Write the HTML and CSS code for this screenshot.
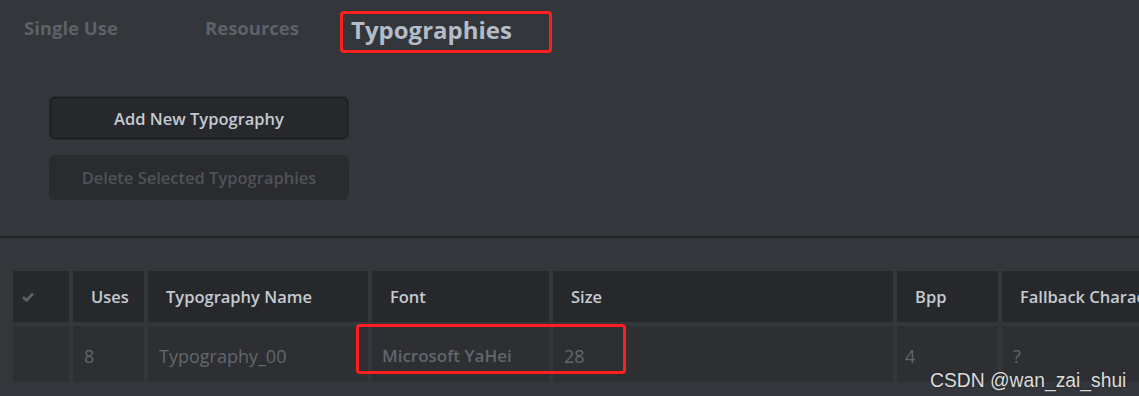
FILE: index.html
```html
<!DOCTYPE html>
<html lang="en">
<head>
  <meta charset="UTF-8" />
  <title>Typographies</title>
  <link rel="stylesheet" href="styles.css">
</head>
<body>
  <div class="top-panel">
    <div class="tabs">
      <span class="tab tab-single">Single Use</span>
      <span class="tab tab-resources">Resources</span>
      <span class="tab tab-active"><span class="highlight">Typographies</span></span>
    </div>

    <div class="actions">
      <button class="btn btn-add">Add New Typography</button>
      <button class="btn btn-delete" disabled>Delete Selected Typographies</button>
    </div>
  </div>

  <div class="divider"></div>

  <div class="table-wrap">
    <div class="grid">
      <div class="cell head check-col">
        <svg width="12" height="10" viewBox="0 0 12 10"><path d="M1 5 L4.5 8.5 L11 1.5" fill="none" stroke="#5c6067" stroke-width="2.6"/></svg>
      </div>
      <div class="cell head">Uses</div>
      <div class="cell head">Typography Name</div>
      <div class="cell head">Font</div>
      <div class="cell head">Size</div>
      <div class="cell head">Bpp</div>
      <div class="cell head">Fallback Character</div>

      <div class="cell data"></div>
      <div class="cell data">8</div>
      <div class="cell data">Typography_00</div>
      <div class="cell data font-cell">Microsoft YaHei</div>
      <div class="cell data">28</div>
      <div class="cell data bpp-cell">4</div>
      <div class="cell data">?</div>
    </div>

    <div class="mark-box"></div>
    <div class="watermark">CSDN @wan_zai_shui</div>
  </div>
</body>
</html>
```

FILE: styles.css
```css
body {
  margin: 0;
  background: #33363b;
  font-family: 'Open Sans', 'Noto Sans', sans-serif;
  overflow: hidden;
}

.top-panel {
  height: 236px;
  box-sizing: border-box;
  padding-top: 11px;
}

.tabs {
  display: flex;
  align-items: center;
  height: 42px;
  font-weight: 700;
}

.tab {
  font-size: 18.5px;
  color: #5d6168;
  margin-top: -10px;
}

.tab-single {
  width: 205px;
  padding-left: 24px;
  box-sizing: border-box;
}

.tab-resources {
  width: 135px;
}

.tab-active {
  margin-top: 0;
}

.highlight {
  display: inline-block;
  height: 42px;
  line-height: 32px;
  box-sizing: border-box;
  padding: 0 37px 4px 8px;
  border: 3px solid #ff1f1f;
  border-radius: 4px;
  font-size: 24px;
  color: #b4bcc6;
}

.actions {
  display: flex;
  flex-direction: column;
  gap: 15px;
  margin: 43px 0 0 49px;
  width: 300px;
}

.btn {
  font-family: 'Open Sans', 'Noto Sans', sans-serif;
  font-size: 16.5px;
  font-weight: 600;
  height: 44px;
  border-radius: 6px;
  border: none;
  cursor: pointer;
}

.btn-add {
  background: #27282c;
  color: #c5cad1;
  outline: 1px dotted #0d0d0f;
  outline-offset: -2px;
  border: 1px solid #2c2d31;
}

.btn-delete {
  height: 45px;
  background: #2a2b2f;
  color: #4f5258;
}

.divider {
  height: 2px;
  background: #232427;
}

.table-wrap {
  position: relative;
  height: 158px;
  padding: 33px 0 0 13px;
  box-sizing: border-box;
}

.grid {
  display: grid;
  grid-template-columns: 56px 71px 220px 177px 340px 101px 200px;
  grid-template-rows: 51px 56px;
  gap: 4px;
}

.cell {
  display: flex;
  align-items: center;
  white-space: nowrap;
  overflow: hidden;
}

.head {
  background: #27282c;
  color: #c5cad1;
  font-size: 16.5px;
  font-weight: 600;
  padding-left: 18px;
}

.check-col {
  padding-left: 9px;
}

.data {
  background: #2d2f33;
  color: #62666d;
  font-size: 18px;
  padding-left: 11px;
  padding-top: 3px;
}

.font-cell {
  font-weight: 600;
  font-size: 17px;
  padding-left: 10px;
}

.bpp-cell {
  padding-left: 8px;
}

.mark-box {
  position: absolute;
  left: 356px;
  top: 86px;
  width: 270px;
  height: 50px;
  box-sizing: border-box;
  border: 3px solid #ff1f1f;
  border-radius: 4px;
}

.watermark {
  position: absolute;
  left: 930px;
  top: 132px;
  font-family: 'Liberation Sans', Arial, sans-serif;
  font-size: 19.3px;
  color: #dcdcdc;
  text-shadow: 0 0 2px #222;
}
```
